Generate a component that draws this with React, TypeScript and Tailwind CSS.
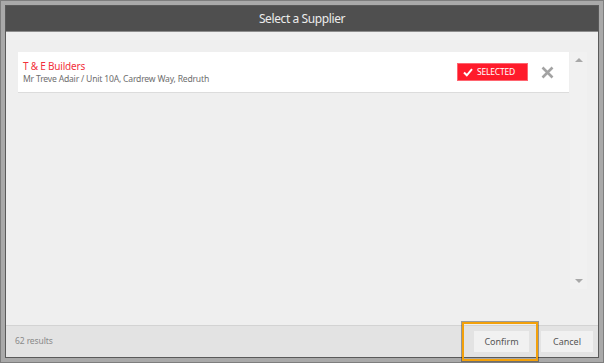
const font = { fontFamily: '"Noto Sans", "Open Sans", sans-serif' };

function CheckIcon() {
  return (
    <svg className="w-[10px] h-[9px]" viewBox="0 0 10 9" fill="none" stroke="white" strokeWidth={2}>
      <path d="M1 4.5 L3.8 7.3 L9 1.2" />
    </svg>
  );
}

function CloseIcon() {
  return (
    <svg className="w-[13px] h-[13px]" viewBox="0 0 13 13" fill="none" stroke="#a3a3a3" strokeWidth={2.6}>
      <path d="M1.5 1.5 L11.5 11.5 M11.5 1.5 L1.5 11.5" />
    </svg>
  );
}

function SupplierRow() {
  return (
    <div className="flex items-center h-[40px] bg-white shadow-[0_1px_0_#dcdcdc] pl-[5px] pr-[15px]">
      <div className="flex-1 flex flex-col">
        <span className="text-[10px] leading-[13px] tracking-[-0.2px] text-[#f2303c]">T &amp; E Builders</span>
        <span className="text-[8.6px] leading-[12px] tracking-[-0.2px] text-[#6e6e6e]">Mr Treve Adair / Unit 10A, Cardrew Way, Redruth</span>
      </div>
      <div className="flex items-center gap-[4px] w-[71px] h-[18px] bg-[#ff1b2b] border border-[#ff6570] pl-[5px]">
        <CheckIcon />
        <span className="text-[8.5px] text-white tracking-[-0.2px]">SELECTED</span>
      </div>
      <div className="ml-[13px]">
        <CloseIcon />
      </div>
    </div>
  );
}

export default function App() {
  return (
    <div className="w-[604px] h-[363px] bg-[#a9a9a9] border border-[#7e7e7e] p-[4px]" style={font}>
      <div className="relative flex flex-col h-full border border-[#5a5a5a]">
        <div className="h-[26px] bg-[#4f4f4f] border-b border-[#8c8c8c] flex items-center justify-center">
          <span className="text-[12px] text-[#ececec] tracking-[-0.4px]">Select a Supplier</span>
        </div>

        <div className="flex-1 flex bg-[#efefef] pl-[12px] pr-[11px] pt-[20px] pb-[36px]">
          <div className="flex-1">
            <SupplierRow />
          </div>
          <div className="ml-[1px] w-[17px] flex flex-col items-center justify-between bg-[#f1f1f1] py-[6px]">
            <div className="w-0 h-0 border-l-[4px] border-r-[4px] border-b-[4px] border-l-transparent border-r-transparent border-b-[#a8a8a8]" />
            <div className="w-0 h-0 border-l-[4px] border-r-[4px] border-t-[4px] border-l-transparent border-r-transparent border-t-[#a8a8a8]" />
          </div>
        </div>

        <div className="h-[32px] bg-[#e3e3e3] border-t border-[#d3d3d3] flex items-center pl-[9px] pr-[5px]">
          <span className="flex-1 text-[8.5px] tracking-[-0.1px] text-[#8a8a8a]">62 results</span>
          <button className="w-[55px] h-[21px] bg-[#f1f1f1] text-[9px] text-[#555]">Confirm</button>
          <button className="ml-[12px] w-[52px] h-[21px] bg-[#f1f1f1] text-[9px] text-[#555]">Cancel</button>
        </div>

        <div className="absolute left-[456px] top-[316px] w-[76px] h-[39px] border-2 border-[#f3a10b] shadow-[0_0_0_1px_rgba(0,0,0,0.35)]" />
      </div>
    </div>
  );
}
